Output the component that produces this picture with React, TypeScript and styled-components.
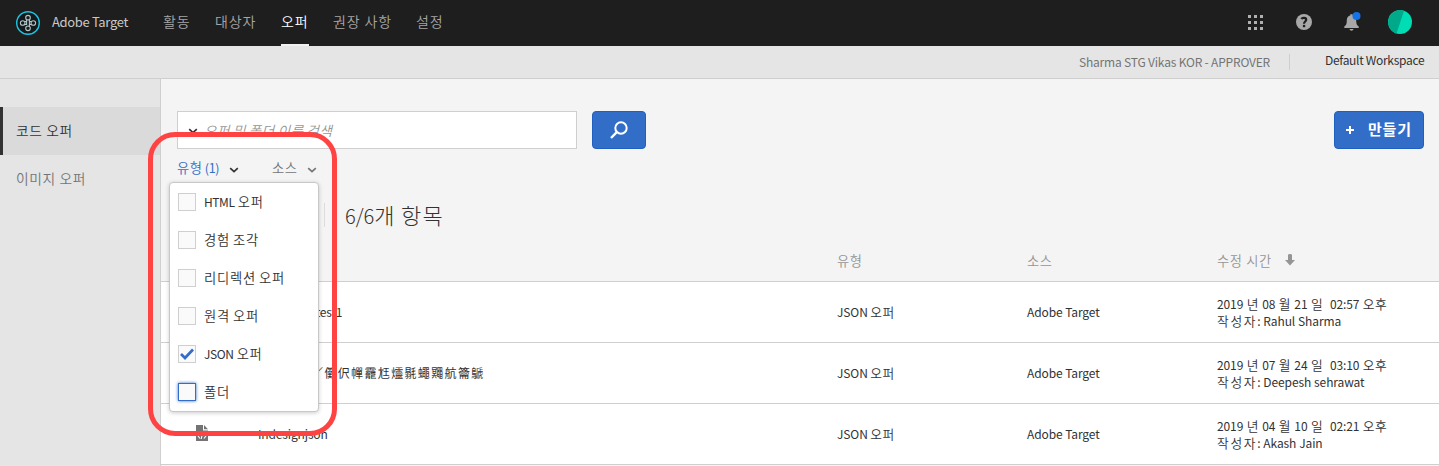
import React from 'react';
import styled, { createGlobalStyle } from 'styled-components';

const Global = createGlobalStyle`
  * { box-sizing: border-box; }
  body { margin: 0; background: #f4f4f4; overflow: hidden; }
  body, button, input { font-family: "Noto Sans CJK KR", "Noto Sans", sans-serif; }
`;

const Page = styled.div`
  height: 466px;
  display: flex;
  flex-direction: column;
  font-size: 13px;
  color: #323232;
  position: relative;
  overflow: hidden;
  white-space: nowrap;
`;

const Hangul = styled.span`
  font-size: 1.06em;
  font-weight: 350;
  letter-spacing: 0.04em;
  line-height: 1;
`;

const Header = styled.header`
  height: 46px;
  flex: none;
  background: #1e1e1e;
  display: flex;
  align-items: center;
  padding: 0 27px 0 16px;
`;

const Product = styled.span`
  width: 111px;
  padding: 0 0 2px 12px;
  font-size: 13px;
  letter-spacing: -0.34px;
  color: #c8c8c8;
  line-height: 20px;
`;

const Nav = styled.nav`
  display: flex;
  gap: 24px;
  flex: 1;
  margin-left: 12px;
  align-self: stretch;
`;

const NavItem = styled.a<{ $active?: boolean; $w: number }>`
  width: ${p => p.$w}px;
  height: 46px;
  font-size: 14px;
  font-weight: 350;
  letter-spacing: 0.9px;
  line-height: 42px;
  color: ${p => (p.$active ? '#fff' : '#a6a6a6')};
  border-bottom: 2px solid ${p => (p.$active ? '#f0f0f0' : 'transparent')};
`;

const Tools = styled.div`
  display: flex;
  align-items: center;
  height: 44px;
  margin-bottom: 2px;
`;

const WorkspaceBar = styled.div`
  height: 33px;
  flex: none;
  background: #e5e5e5;
  border-bottom: 1px solid #cfcfcf;
  display: flex;
  justify-content: flex-end;
  padding-right: 14px;
  font-size: 12px;
`;

const Org = styled.span`
  width: 211px;
  height: 16px;
  margin-top: 8px;
  border-right: 1px solid #cfcfcf;
  color: #747474;
  line-height: 16px;
  letter-spacing: -0.19px;
`;

const Workspace = styled.span`
  width: 100px;
  margin: 6px 0 0 35px;
  line-height: 16px;
  letter-spacing: -0.3px;
`;

const Body = styled.div`
  flex: 1;
  display: flex;
  min-height: 0;
`;

const Sidebar = styled.aside`
  width: 161px;
  flex: none;
  background: #e5e5e5;
  border-right: 1px solid #cfcfcf;
  padding-top: 28px;
`;

const SideItem = styled.div<{ $active?: boolean }>`
  height: 48px;
  line-height: 48px;
  word-spacing: 1px;
  padding-left: 13px;
  border-left: 3px solid ${p => (p.$active ? '#323232' : 'transparent')};
  background: ${p => (p.$active ? '#dadada' : 'transparent')};
  color: ${p => (p.$active ? '#323232' : '#747474')};
`;

const Main = styled.main`
  flex: 1;
  display: flex;
  flex-direction: column;
  background: #f4f4f4;
`;

const SearchRow = styled.div`
  display: flex;
  align-items: center;
  margin-top: 32px;
  padding: 0 15px 0 16px;
`;

const SearchBox = styled.div`
  width: 400px;
  height: 38px;
  background: #fff;
  border: 1px solid #cfcfcf;
  display: flex;
  align-items: center;
  padding: 0 0 0 10px;
  gap: 6px;
  color: #959595;
  font-size: 12.8px;
  font-style: italic;
`;

const Button = styled.button<{ $w: number }>`
  width: ${p => p.$w}px;
  height: 38px;
  border: 1px solid #1f5fbf;
  border-radius: 4px;
  background: #326ec8;
  color: #fff;
  display: flex;
  align-items: center;
  justify-content: center;
  padding: 0;
  font-size: 15px;
  font-weight: 700;
`;

const SearchButton = styled(Button)`
  margin-left: 15px;
`;

const CreateButton = styled(Button)`
  margin-left: auto;
  justify-content: flex-start;
  padding-left: 11px;
  gap: 14px;
`;

const CreateLabel = styled.span`
  letter-spacing: 0.8px;
  padding-bottom: 3px;
`;

const Filters = styled.div`
  display: flex;
  height: 37px;
  padding-left: 16px;
  font-size: 12.5px;
`;

const Filter = styled.div<{ $active?: boolean; $w: number }>`
  width: ${p => p.$w}px;
  display: flex;
  align-items: center;
  justify-content: space-between;
  margin-right: 33px;
  letter-spacing: -0.4px;
  color: ${p => (p.$active ? '#326ec8' : '#747474')};
  svg {
    margin-top: 2px;
  }
`;

const Summary = styled.div`
  height: 36px;
  margin: 11px 0 0 163px;
  display: flex;
  align-items: center;
  font-size: 20px;
  font-weight: 300;
  word-spacing: 1px;
  ${Hangul} {
    font-size: 22px;
    font-weight: 300;
    letter-spacing: 1.1px;
  }
`;

const Divider = styled.span`
  width: 1px;
  height: 24px;
  background: #dcdcdc;
  margin-right: 20px;
`;

const HeadRow = styled.div`
  display: grid;
  grid-template-columns: 676px 190px 190px 1fr;
  height: 49px;
  border-bottom: 1px solid #cfcfcf;
  color: #959595;
  line-height: 55px;
  font-size: 12.5px;
`;

const SortCell = styled.div`
  display: flex;
  align-items: center;
  gap: 13px;
  height: 54px;
  word-spacing: 1px;
`;

const Row = styled.div`
  display: grid;
  grid-template-columns: 97px 579px 190px 190px 1fr;
  align-items: center;
  flex: none;
  height: 61px;
  background: #fff;
  border-bottom: 1px solid #cfcfcf;
  font-size: 12px;
  line-height: 17px;
`;

const Cell = styled.div`
  padding-bottom: 2px;
  letter-spacing: -0.1px;
`;

const NameCell = styled(Cell)<{ $ls: number }>`
  letter-spacing: ${p => p.$ls}px;
`;

const IconCell = styled.div`
  padding: 0 0 2px 35px;
  height: 18px;
`;

const Dates = styled.div`
  white-space: pre;
  letter-spacing: -0.1px;
  word-spacing: 0.8px;
`;

const Author = styled.div`
  word-spacing: 0.3px;
  ${Hangul} {
    letter-spacing: 1.7px;
  }
`;

const Menu = styled.div`
  position: absolute;
  left: 169px;
  top: 182px;
  width: 150px;
  height: 230px;
  background: #fff;
  border: 1px solid #c8c8c8;
  border-radius: 4px;
  box-shadow: 0 1px 4px rgba(0, 0, 0, 0.2);
`;

const Option = styled.label`
  height: 38px;
  display: flex;
  align-items: center;
  padding-left: 8px;
  gap: 8px;
  font-size: 12px;
`;

const OptionLabel = styled.span`
  letter-spacing: -0.4px;
  word-spacing: 0.8px;
  padding-bottom: 1px;
  ${Hangul} {
    font-size: 13.3px;
    letter-spacing: 0.75px;
  }
`;

const Check = styled.span<{ $focus?: boolean }>`
  width: 18px;
  height: 18px;
  background: #fafafa;
  border: 1px solid ${p => (p.$focus ? '#326ec8' : '#cfcfcf')};
  box-shadow: ${p => (p.$focus ? '0 0 3px #326ec8' : 'none')};
  display: flex;
  align-items: center;
  justify-content: center;
`;

const Highlight = styled.div`
  position: absolute;
  left: 148px;
  top: 132px;
  width: 189px;
  height: 304px;
  border: 5px solid #ff4343;
  border-radius: 27px;
`;

/* Wraps each run of Hangul so that it gets its own size and tracking. */
const Mixed = ({ text }: { text: string }) => (
  <span>
    {text.split(/([가-힣]+)/).map((part, i) => (i % 2 ? <Hangul key={i}>{part}</Hangul> : part))}
  </span>
);

const Chevron = ({ color }: { color: string }) => (
  <svg width="10" height="10" viewBox="0 0 10 10" fill="none" stroke={color} strokeWidth="1.7">
    <path d="M1.2 4.2 5 7.6 8.8 4.2" />
  </svg>
);

const Logo = () => (
  <svg width="24" height="24" viewBox="0 0 24 24" fill="none">
    <circle cx="12" cy="12" r="11.3" fill="#14191b" stroke="#1cc4e4" strokeWidth="1.4" />
    <g stroke="#b4c4c8" strokeWidth="1.1">
      <circle cx="12" cy="6.7" r="2.3" />
      <circle cx="12" cy="17.3" r="2.3" />
      <circle cx="6.7" cy="12" r="2.3" />
      <circle cx="17.3" cy="12" r="2.3" />
      <path d="M10.6 8.600v5.400M13.4 8.600v6.800M8.600 10.500h2M13.500 10.500h2M8.600 13.500h2M13.500 13.500h2" />
    </g>
  </svg>
);

const AppsIcon = () => (
  <svg width="15" height="15" viewBox="0 0 15 15" fill="#b0b0b0">
    {[0, 6, 12].map(y => [0, 6, 12].map(x => <rect key={`${x}-${y}`} x={x} y={y} width="3" height="3" />))}
  </svg>
);

const HelpIcon = () => (
  <svg width="16" height="16" viewBox="0 0 16 16">
    <circle cx="8" cy="8" r="8" fill="#a8a8a8" />
    <path d="M5.4 5C6.2 3.500 10.2 3.400 10.200 5.800c0 1.700-2.200 1.700-2.200 3.900" fill="none" stroke="#1e1e1e" strokeWidth="2.200" />
    <rect x="6.900" y="10.900" width="2.300" height="2.300" fill="#1e1e1e" />
  </svg>
);

const BellIcon = () => (
  <svg width="18" height="20" viewBox="0 0 18 20">
    <path d="M6.3 2.3h2.4v1.2c3 .7 3.4 3 3.5 5.5.1 3 .7 4.3 2.5 5.6v1.4H.3v-1.4C2.1 13.3 2.700 12 2.800 9c.1-2.500.5-4.800 3.500-5.500z" fill="#a8a8a8" />
    <path d="M5.500 17h4c-.4 2.300-3.600 2.300-4 0z" fill="#a8a8a8" />
    <circle cx="12.500" cy="4" r="4" fill="#1473e6" />
  </svg>
);

const Avatar = () => (
  <svg width="24" height="24" viewBox="0 0 24 24">
    <circle cx="12" cy="12" r="12" fill="#00dcb4" />
    <path d="M16 .7A12 12 0 1 0 8.500 23.500z" fill="#00a98a" />
  </svg>
);

const ToolSlot = styled.span<{ $ml?: number }>`
  display: flex;
  margin-left: ${p => p.$ml ?? 0}px;
`;

const SearchIcon = () => (
  <svg width="18" height="18" viewBox="0 0 18 18" fill="none" stroke="#fff">
    <circle cx="11" cy="7" r="5.700" strokeWidth="2" />
    <path d="M6.800 11.200 1 17" strokeWidth="2.400" />
  </svg>
);

const PlusIcon = () => (
  <svg width="8" height="8" viewBox="0 0 8 8" stroke="#fff" strokeWidth="2">
    <path d="M4 0v8M0 4h8" />
  </svg>
);

const SortIcon = () => (
  <svg width="10" height="12" viewBox="0 0 10 12" fill="#959595">
    <path d="M3 1q0-1 2-1t2 1v5h3L5 11.500 0 6h3z" />
  </svg>
);

const CodeFileIcon = () => (
  <svg width="13" height="16" viewBox="0 0 13 16">
    <path d="M0 0h7v5.500h5V16H0zM8 0l4 4.300H8z" fill="#747474" />
    <path d="M4 7.500 1.800 10.500 4 13.500M8 7.500l2.200 3L8 13.500M6.800 7l-1.600 7" fill="none" stroke="#fff" strokeWidth="1.100" />
  </svg>
);

const Tick = () => (
  <svg width="14" height="12" viewBox="0 0 14 12" fill="none" stroke="#326ec8" strokeWidth="2.700">
    <path d="M1 6l4 4L13 1.500" />
  </svg>
);

const options = ['HTML 오퍼', '경험 조각', '리디렉션 오퍼', '원격 오퍼', 'JSON 오퍼', '폴더'];

const offers = [
  { name: 'Json Offer test1', ls: -0.2, date: '2019 년 08 월 21 일  02:57 오후', author: 'Rahul Sharma' },
  { name: 'offer 12／儺伬幝龗尪爧毾蠅鼆航籥鷈', ls: 1.35, date: '2019 년 07 월 24 일  03:10 오후', author: 'Deepesh sehrawat' },
  { name: 'Indesignjson', ls: -0.15, date: '2019 년 04 월 10 일  02:21 오후', author: 'Akash Jain' },
];

export default function App() {
  return (
    <Page>
      <Global />
      <Header>
        <Logo />
        <Product>Adobe Target</Product>
        <Nav>
          <NavItem $w={28}>활동</NavItem>
          <NavItem $w={42}>대상자</NavItem>
          <NavItem $w={28} $active>오퍼</NavItem>
          <NavItem $w={59}>권장 사항</NavItem>
          <NavItem $w={28}>설정</NavItem>
        </Nav>
        <Tools>
          <ToolSlot><AppsIcon /></ToolSlot>
          <ToolSlot $ml={33}><HelpIcon /></ToolSlot>
          <ToolSlot $ml={32}><BellIcon /></ToolSlot>
          <ToolSlot $ml={26}><Avatar /></ToolSlot>
        </Tools>
      </Header>
      <WorkspaceBar>
        <Org>Sharma STG Vikas KOR - APPROVER</Org>
        <Workspace>Default Workspace</Workspace>
      </WorkspaceBar>
      <Body>
        <Sidebar>
          <SideItem $active><Mixed text="코드 오퍼" /></SideItem>
          <SideItem><Mixed text="이미지 오퍼" /></SideItem>
        </Sidebar>
        <Main>
          <SearchRow>
            <SearchBox>
              <Chevron color="#323232" />
              <Mixed text="오퍼 및 폴더 이름 검색" />
            </SearchBox>
            <SearchButton $w={54}><SearchIcon /></SearchButton>
            <CreateButton $w={90}><PlusIcon /><CreateLabel>만들기</CreateLabel></CreateButton>
          </SearchRow>
          <Filters>
            <Filter $w={62} $active><Mixed text="유형 (1)" /><Chevron color="#323232" /></Filter>
            <Filter $w={45}><Mixed text="소스" /><Chevron color="#747474" /></Filter>
          </Filters>
          <Summary><Divider /><Mixed text="6/6개 항목" /></Summary>
          <HeadRow>
            <span />
            <Mixed text="유형" />
            <Mixed text="소스" />
            <SortCell><Mixed text="수정 시간" /><SortIcon /></SortCell>
          </HeadRow>
          {offers.map(o => (
            <Row key={o.name}>
              <IconCell><CodeFileIcon /></IconCell>
              <NameCell $ls={o.ls}>{o.name}</NameCell>
              <Cell><Mixed text="JSON 오퍼" /></Cell>
              <Cell>Adobe Target</Cell>
              <Dates>
                <Mixed text={o.date} />
                <Author><Mixed text={`작성자: ${o.author}`} /></Author>
              </Dates>
            </Row>
          ))}
        </Main>
      </Body>
      <Menu>
        {options.map(o => (
          <Option key={o}>
            <Check $focus={o === '폴더'}>{o.startsWith('JSON') && <Tick />}</Check>
            <OptionLabel><Mixed text={o} /></OptionLabel>
          </Option>
        ))}
      </Menu>
      <Highlight />
    </Page>
  );
}
